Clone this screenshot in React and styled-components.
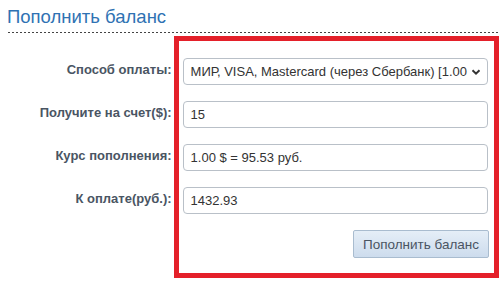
import styled, { createGlobalStyle } from 'styled-components';

const GlobalStyle = createGlobalStyle`
  body {
    margin: 0;
    background: #ffffff;
    font-family: 'Liberation Sans', Arial, sans-serif;
  }
`;

const Page = styled.div`
  width: 499px;
  height: 293px;
  overflow: hidden;
`;

const Title = styled.h2`
  margin: 0;
  padding: 6px 0 0 7px;
  height: 26px;
  font-size: 18.5px;
  font-weight: normal;
  color: #2f72b3;
  line-height: 22px;
`;

const Dotted = styled.div`
  margin-left: 8px;
  height: 1px;
  background-image: linear-gradient(to right, #444 50%, transparent 50%);
  background-size: 4px 1px;
`;

const Form = styled.div`
  display: flex;
  align-items: flex-start;
  margin-top: 3px;
`;

const Labels = styled.div`
  width: 177px;
  padding-top: 22px;
  display: flex;
  flex-direction: column;
  gap: 16px;
`;

const Label = styled.div`
  height: 27px;
  padding-right: 2px;
  display: flex;
  align-items: center;
  justify-content: flex-end;
  font-size: 13px;
  font-weight: bold;
  color: #4a5563;
  margin-top: -2px;
  margin-bottom: 2px;
`;

const Panel = styled.div`
  width: 309px;
  border: 5px solid #e4202a;
  padding: 17px 6px 15px 4px;
  display: flex;
  flex-direction: column;
  gap: 16px;
`;

const Field = styled.div`
  box-sizing: border-box;
  height: 27px;
  border: 1px solid #b9c0c8;
  border-radius: 4px;
  background: #fff;
  display: flex;
  align-items: center;
  justify-content: space-between;
  padding: 0 6px 0 7px;
  font-size: 13px;
  color: #333;
  white-space: nowrap;
  overflow: hidden;
`;

const Chevron = styled.svg`
  flex: none;
  width: 10px;
  height: 10px;
  margin-left: 4px;
`;

const Actions = styled.div`
  display: flex;
  justify-content: flex-end;
  margin-right: -1px;
`;

const Button = styled.button`
  width: 136px;
  height: 28px;
  border: 1px solid #a9bccf;
  border-radius: 2px;
  background: linear-gradient(#e5eef7, #cddced);
  font-family: 'Liberation Sans', Arial, sans-serif;
  font-size: 13.5px;
  color: #4a5563;
  padding: 0;
`;

const rows = [
  { label: 'Способ оплаты:', value: 'МИР, VISA, Mastercard (через Сбербанк) [1.00', select: true },
  { label: 'Получите на счет($):', value: '15' },
  { label: 'Курс пополнения:', value: '1.00 $ = 95.53 руб.' },
  { label: 'К оплате(руб.):', value: '1432.93' },
];

export default function App() {
  return (
    <Page>
      <GlobalStyle />
      <Title>Пополнить баланс</Title>
      <Dotted />
      <Form>
        <Labels>
          {rows.map((r) => (
            <Label key={r.label}>{r.label}</Label>
          ))}
        </Labels>
        <Panel>
          {rows.map((r) => (
            <Field key={r.label}>
              <span>{r.value}</span>
              {r.select && (
                <Chevron viewBox="0 0 10 10">
                  <path d="M1.5 3.2 L5 6.7 L8.5 3.2" fill="none" stroke="#333" strokeWidth="2" />
                </Chevron>
              )}
            </Field>
          ))}
          <Actions>
            <Button>Пополнить баланс</Button>
          </Actions>
        </Panel>
      </Form>
    </Page>
  );
}
